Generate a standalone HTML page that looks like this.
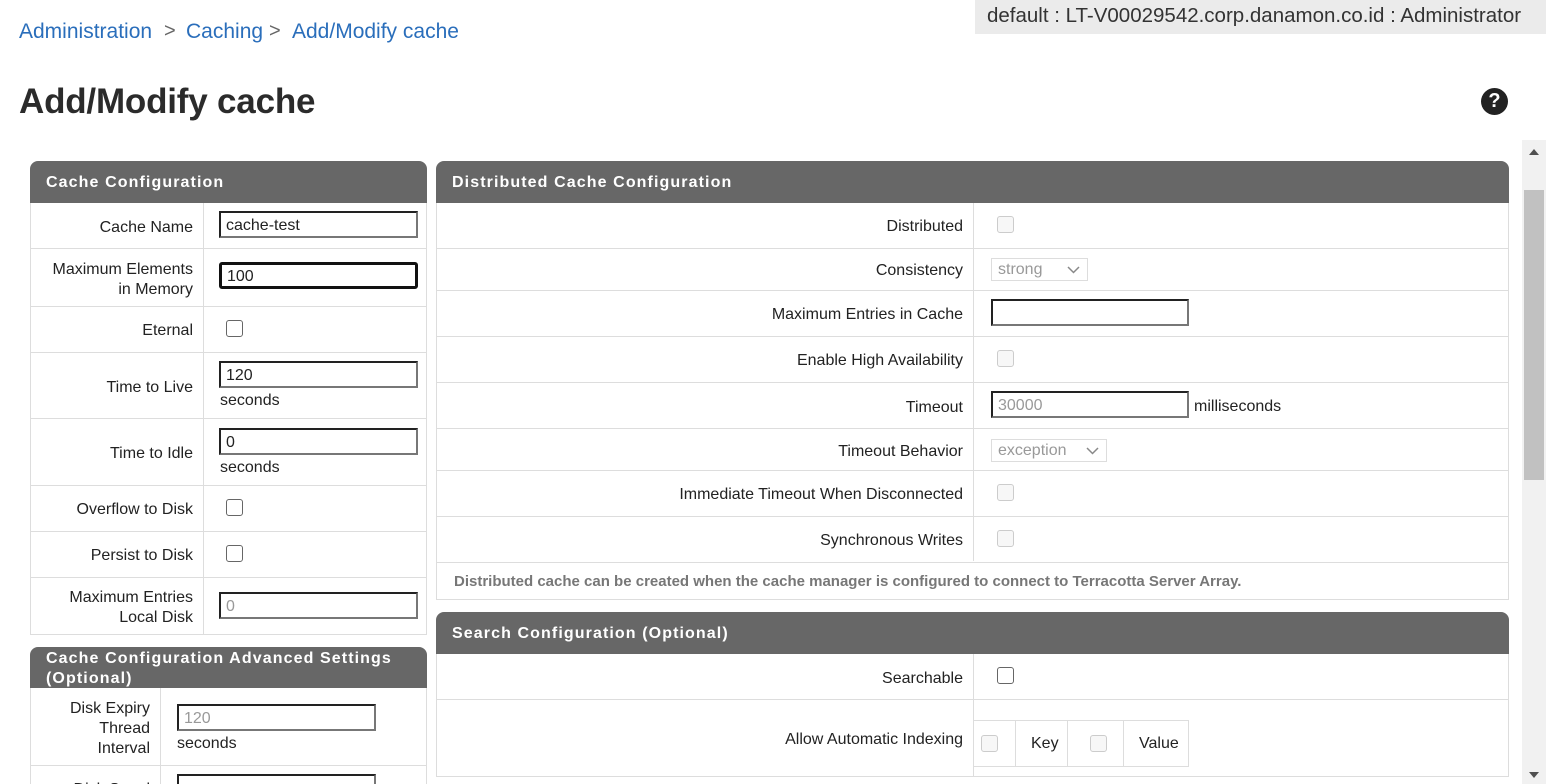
<!DOCTYPE html>
<html><head><meta charset="utf-8"><style>
*{box-sizing:border-box}
html,body{margin:0;width:1546px;height:784px;overflow:hidden}
body{background:#fff;font-family:"Liberation Sans",Arial,sans-serif;color:#222;position:relative}
.a{position:absolute}
.crumb{top:20px;font-size:21px;color:#2a6ebb}
.sep{top:20px;font-size:20px;color:#666}
.user{left:975px;top:0;width:571px;height:34px;background:#ebebeb;font-size:20.5px;color:#333;padding:4px 0 0 12px;white-space:nowrap}
h1{position:absolute;left:19px;top:82px;margin:0;font-size:35px;font-weight:bold;color:#2b2b2b;letter-spacing:-0.2px}
.help{left:1481px;top:88px;width:27px;height:27px;border-radius:50%;background:#222;color:#fff;font-weight:bold;font-size:20px;text-align:center;line-height:27px}
.hdr{background:#676767;color:#fff;font-weight:bold;font-size:16px;letter-spacing:1.1px;padding-left:16px;border-radius:8px 8px 0 0}
.box{border:1px solid #ddd;border-top:none;overflow:hidden}
.row{position:absolute;left:0;right:0;border-top:1px solid #ddd}
.lbl{position:absolute;text-align:right;font-size:16px;line-height:20px;margin-top:2px}
.vl{position:absolute;top:0;bottom:0;border-left:1px solid #ddd}
.in{position:absolute;height:27px;border:2px solid;border-color:#222 #777 #777 #222;font-size:16px;padding:3px 5px;line-height:19px}
.in.d{color:#999}
.cb{position:absolute;width:17px;height:17px;border:1.5px solid #666;border-radius:3px;background:#fff}
.cb.d{border:1px solid #ccc;background:#f7f7f7}
.sel{position:absolute;height:23px;border:1px solid #ddd;color:#999;font-size:16px;padding:1px 6px;line-height:20px}
.sel svg{position:absolute;right:7px;top:7px}
.s{position:absolute;font-size:16px;margin-top:2px}
</style></head><body>
<div class="a crumb" style="left:19px">Administration</div>
<div class="a sep" style="left:164px">&gt;</div>
<div class="a crumb" style="left:186px">Caching</div>
<div class="a sep" style="left:269px">&gt;</div>
<div class="a crumb" style="left:292px">Add/Modify cache</div>
<div class="a user">default : LT-V00029542.corp.danamon.co.id : Administrator</div>
<h1>Add/Modify cache</h1>
<div class="a help">?</div>

<div class="a hdr" style="left:30px;top:161px;width:397px;height:42px;line-height:44px">Cache Configuration</div>
<div class="a box" style="left:30px;top:203px;width:397px;height:432px">
 <div class="vl" style="left:172px"></div>
 <div class="lbl" style="right:233px;top:13px">Cache Name</div>
 <div class="in" style="left:188px;top:8px;width:199px">cache-test</div>
 <div class="row" style="top:45px"></div>
 <div class="lbl" style="right:233px;top:55px">Maximum Elements<br>in Memory</div>
 <div class="in" style="left:188px;top:59px;width:199px;border:3px solid #111;border-radius:3px;padding-top:2px">100</div>
 <div class="row" style="top:103px"></div>
 <div class="lbl" style="right:233px;top:116px">Eternal</div>
 <div class="cb" style="left:195px;top:117px"></div>
 <div class="row" style="top:149px"></div>
 <div class="lbl" style="right:233px;top:173px">Time to Live</div>
 <div class="in" style="left:188px;top:158px;width:199px">120</div>
 <div class="s" style="left:189px;top:187px">seconds</div>
 <div class="row" style="top:215px"></div>
 <div class="lbl" style="right:233px;top:239px">Time to Idle</div>
 <div class="in" style="left:188px;top:225px;width:199px">0</div>
 <div class="s" style="left:189px;top:254px">seconds</div>
 <div class="row" style="top:282px"></div>
 <div class="lbl" style="right:233px;top:295px">Overflow to Disk</div>
 <div class="cb" style="left:195px;top:296px"></div>
 <div class="row" style="top:328px"></div>
 <div class="lbl" style="right:233px;top:341px">Persist to Disk</div>
 <div class="cb" style="left:195px;top:342px"></div>
 <div class="row" style="top:374px"></div>
 <div class="lbl" style="right:233px;top:383px">Maximum Entries<br>Local Disk</div>
 <div class="in d" style="left:188px;top:389px;width:199px">0</div>
</div>
<div class="a hdr" style="left:30px;top:647px;width:397px;height:41px;line-height:20px;padding-top:2px">Cache Configuration Advanced Settings<br>(Optional)</div>
<div class="a box" style="left:30px;top:688px;width:397px;height:100px">
 <div class="vl" style="left:129px"></div>
 <div class="lbl" style="right:276px;top:9px">Disk Expiry<br>Thread<br>Interval</div>
 <div class="in d" style="left:146px;top:16px;width:199px">120</div>
 <div class="s" style="left:146px;top:45px">seconds</div>
 <div class="row" style="top:77px"></div>
 <div class="lbl" style="right:276px;top:90px">Disk Spool</div>
 <div class="in" style="left:146px;top:86px;width:199px"></div>
</div>

<div class="a hdr" style="left:436px;top:161px;width:1073px;height:42px;line-height:44px">Distributed Cache Configuration</div>
<div class="a box" style="left:436px;top:203px;width:1073px;height:397px">
 <div class="vl" style="left:536px;bottom:38px"></div>
 <div class="lbl" style="right:545px;top:12px">Distributed</div>
 <div class="cb d" style="left:560px;top:13px"></div>
 <div class="row" style="top:45px"></div>
 <div class="lbl" style="right:545px;top:56px">Consistency</div>
 <div class="sel" style="left:554px;top:55px;width:97px">strong<svg width="13" height="8"><path d="M1 1l5.5 5.5L12 1" stroke="#888" stroke-width="1.5" fill="none"/></svg></div>
 <div class="row" style="top:87px"></div>
 <div class="lbl" style="right:545px;top:100px">Maximum Entries in Cache</div>
 <div class="in" style="left:554px;top:96px;width:198px"></div>
 <div class="row" style="top:133px"></div>
 <div class="lbl" style="right:545px;top:146px">Enable High Availability</div>
 <div class="cb d" style="left:560px;top:147px"></div>
 <div class="row" style="top:179px"></div>
 <div class="lbl" style="right:545px;top:193px">Timeout</div>
 <div class="in d" style="left:554px;top:188px;width:198px">30000</div>
 <div class="s" style="left:757px;top:193px">milliseconds</div>
 <div class="row" style="top:225px"></div>
 <div class="lbl" style="right:545px;top:237px">Timeout Behavior</div>
 <div class="sel" style="left:554px;top:236px;width:116px">exception<svg width="13" height="8"><path d="M1 1l5.5 5.5L12 1" stroke="#888" stroke-width="1.5" fill="none"/></svg></div>
 <div class="row" style="top:267px"></div>
 <div class="lbl" style="right:545px;top:280px">Immediate Timeout When Disconnected</div>
 <div class="cb d" style="left:560px;top:281px"></div>
 <div class="row" style="top:313px"></div>
 <div class="lbl" style="right:545px;top:326px">Synchronous Writes</div>
 <div class="cb d" style="left:560px;top:327px"></div>
 <div class="row" style="top:359px"></div>
 <div class="s" style="left:17px;top:368px;font-size:15px;font-weight:bold;color:#777">Distributed cache can be created when the cache manager is configured to connect to Terracotta Server Array.</div>
</div>
<div class="a hdr" style="left:436px;top:612px;width:1073px;height:42px;line-height:44px">Search Configuration (Optional)</div>
<div class="a box" style="left:436px;top:654px;width:1073px;height:123px">
 <div class="vl" style="left:536px"></div>
 <div class="lbl" style="right:545px;top:13px">Searchable</div>
 <div class="cb" style="left:560px;top:13px"></div>
 <div class="row" style="top:45px"></div>
 <div class="lbl" style="right:545px;top:74px">Allow Automatic Indexing</div>
 <div class="a" style="left:536px;top:66px;width:216px;height:47px;border:1px solid #ddd">
  <div class="vl" style="left:41px"></div><div class="vl" style="left:93px"></div><div class="vl" style="left:149px"></div>
  <div class="cb d" style="left:7px;top:14px"></div>
  <div class="s" style="left:57px;top:12px">Key</div>
  <div class="cb d" style="left:116px;top:14px"></div>
  <div class="s" style="left:165px;top:12px">Value</div>
 </div>
</div>

<div class="a" style="left:1522px;top:140px;width:24px;height:644px;background:#f1f1f1"></div>
<div class="a" style="left:1524px;top:190px;width:20px;height:290px;background:#c1c1c1"></div>
<svg class="a" style="left:1528px;top:148px" width="12" height="8"><path d="M1 7L6 1L11 7Z" fill="#505050"/></svg>
<svg class="a" style="left:1528px;top:771px" width="12" height="8"><path d="M1 1L6 7L11 1Z" fill="#505050"/></svg>
</body></html>
